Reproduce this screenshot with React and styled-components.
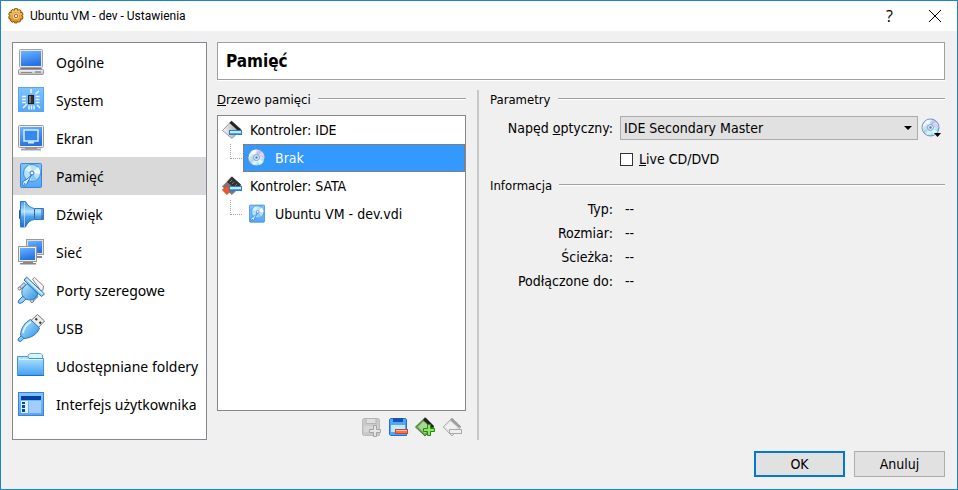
import React from "react";
import styled, { createGlobalStyle, css } from "styled-components";

const uiFont = '"DejaVu Sans Condensed", "DejaVu Sans", sans-serif';
const listFont = '"Noto Sans", "Open Sans", sans-serif';

const GlobalStyle = createGlobalStyle`
  *, *::before, *::after { box-sizing: border-box; }
  body { margin: 0; background: #f0f0f0; }
  button, select, input { font: inherit; color: inherit; margin: 0; }
  ul, dl, dd { margin: 0; padding: 0; list-style: none; }
`;

const Window = styled.div`
  min-height: 100vh;
  display: flex;
  flex-direction: column;
  border: 1px solid #1883d7;
  background: #f0f0f0;
  color: #000;
  font: 14px/20px ${uiFont};
`;

const TitleBar = styled.header`
  display: flex;
  align-items: center;
  height: 30px;
  padding-left: 7px;
  background: #fff;
  font: 12px/16px Roboto, "Open Sans", sans-serif;
`;

const WindowTitle = styled.span`
  flex: 1;
  padding-left: 6px;
`;

const CaptionButton = styled.button`
  display: grid;
  place-items: center;
  width: 45px;
  height: 30px;
  padding: 0;
  border: 0;
  background: none;
  font: 16px/20px "Open Sans", sans-serif;
`;

const Body = styled.div`
  flex: 1;
  display: grid;
  grid-template-columns: 195px minmax(0, 1fr);
  gap: 10px;
  padding: 11px 12px 11px 11px;
`;

const Sidebar = styled.nav`
  border: 1px solid #828790;
  background: #fff;
  font: 14px/20px ${listFont};
`;

const SidebarItem = styled.button`
  display: flex;
  align-items: center;
  gap: 11px;
  width: 100%;
  height: 38px;
  padding: 0 0 0 4px;
  border: 0;
  background: ${(p) => (p.$active ? "#d9d9d9" : "transparent")};
  white-space: nowrap;
  text-align: left;
`;

const SidebarLabel = styled.span`
  padding-top: 2px;
`;

const Page = styled.main`
  display: flex;
  flex-direction: column;
  min-width: 0;
`;

const PageHeading = styled.h1`
  margin: 0 0 10px;
  padding: 1px 8px 0;
  border: 1px solid #a0a0a0;
  box-shadow: 0 1px #fff;
  background: #fff;
  font: bold 17px/35px ${uiFont};
`;

const Panes = styled.div`
  flex: 1;
  display: grid;
  grid-template-columns: 249px 2px minmax(0, 1fr);
  column-gap: 11px;
`;

const Splitter = styled.div`
  background: #c8c8c8;
`;

const Pane = styled.section`
  display: flex;
  flex-direction: column;
  min-width: 0;
`;

const LegendRow = styled.h2`
  display: flex;
  align-items: center;
  gap: 7px;
  margin: 0;
  font: 13px/20px ${uiFont};

  &::after {
    content: "";
    flex: 1;
    height: 2px;
    margin-bottom: 2px;
    background: linear-gradient(#a0a0a0 50%, #fff 50%);
  }
`;

const Tree = styled.ul`
  flex: 1;
  margin-top: 5px;
  border: 1px solid #828790;
  background: #fff;
`;

const TreeButton = styled.button`
  display: flex;
  align-items: center;
  flex: 1;
  gap: 8px;
  width: 100%;
  height: 28px;
  padding: 0 0 0 3px;
  border: 1px solid transparent;
  background: transparent;
  text-align: left;

  ${(p) =>
    p.$selected &&
    css`
      border: 1px dotted #cc6600;
      background: #3399ff;
      color: #fff;
    `}
`;

const TreeBranch = styled.li`
  display: flex;
  padding-left: 12px;

  &::before {
    content: "";
    width: 12px;
    height: 15px;
    margin-right: 1px;
    border: dotted #a0a0a0;
    border-width: 0 0 1px 1px;
  }
`;

const ToolRow = styled.div`
  display: flex;
  justify-content: flex-end;
  gap: 7px;
  padding: 5px 4px 2px 0;
`;

const IconButton = styled.button`
  display: grid;
  place-items: center;
  width: 20px;
  height: 22px;
  padding: 0;
  border: 0;
  background: none;
`;

const Fields = styled.div`
  display: grid;
  grid-template-columns: 130px minmax(0, 1fr) 27px;
  padding-top: 6px;
  align-items: center;
`;

const FieldLabel = styled.label`
  padding-right: 7px;
  text-align: right;
  white-space: nowrap;
`;

const SelectBox = styled.div`
  display: grid;
  grid-template-columns: minmax(0, 1fr) 13px;
  align-items: center;
  height: 24px;
  border: 1px solid #adadad;
  background: #e1e1e1;

  & > svg {
    grid-area: 1 / 2;
    pointer-events: none;
  }
`;

const Select = styled.select`
  grid-area: 1 / 1 / 2 / 3;
  appearance: none;
  height: 22px;
  padding: 0 3px;
  border: 0;
  outline: 0;
  background: transparent;
`;

const DiscMenuButton = styled(IconButton)`
  margin-left: 3px;
`;

const CheckLabel = styled.label`
  grid-column: 2 / 4;
  display: flex;
  align-items: center;
  gap: 6px;
  padding: 9px 0 7px;
`;

const Checkbox = styled.input`
  appearance: none;
  width: 13px;
  height: 13px;
  border: 1px solid #333;
  background: #fff;
  &:checked { background: #0078d7; }
`;

const Info = styled.dl`
  display: grid;
  grid-template-columns: 123px minmax(0, 1fr);
  gap: 4px 12px;
  padding-top: 3px;
`;

const InfoName = styled.dt`
  text-align: right;
  white-space: nowrap;
`;

const Footer = styled.footer`
  display: flex;
  justify-content: flex-end;
  gap: 9px;
  padding: 0 12px 12px;
`;

const PushButton = styled.button`
  width: 91px;
  height: 26px;
  padding: 0;
  border: ${(p) => (p.$primary ? "2px solid #0078d7" : "1px solid #adadad")};
  background: #e1e1e1;
`;

const Icon = ({ size = 28, children }) => (
  <svg width={size} height={size} viewBox={`0 0 ${size} ${size}`} aria-hidden="true">
    {children}
  </svg>
);

const Gradients = () => (
  <svg width="0" height="0" aria-hidden="true">
    <defs>
      <linearGradient id="screen" x1="0" y1="0" x2=".3" y2="1">
        <stop stopColor="#69b5ff" />
        <stop offset="1" stopColor="#2872e5" />
      </linearGradient>
      <linearGradient id="tile" x1="0" y1="0" x2="0" y2="1">
        <stop stopColor="#7fc4ff" />
        <stop offset="1" stopColor="#55a6fb" />
      </linearGradient>
      <linearGradient id="folder" x1="0" y1="0" x2="0" y2="1">
        <stop stopColor="#b5e7ff" />
        <stop offset="1" stopColor="#42a0f4" />
      </linearGradient>
      <linearGradient id="horn" x1="0" y1="0" x2="0" y2="1">
        <stop stopColor="#4a9be4" />
        <stop offset=".4" stopColor="#b4e2ff" />
        <stop offset=".6" stopColor="#4fa0ea" />
        <stop offset="1" stopColor="#1f6fc8" />
      </linearGradient>
      <linearGradient id="plug" x1="0" y1="0" x2="1" y2="1">
        <stop stopColor="#c4ebff" />
        <stop offset="1" stopColor="#2590e4" />
      </linearGradient>
      <linearGradient id="metal" x1="0" y1="0" x2="0" y2="1">
        <stop stopColor="#fafafa" />
        <stop offset="1" stopColor="#b8b8b8" />
      </linearGradient>
      <linearGradient id="gold" x1="0" y1="0" x2="0" y2="1">
        <stop stopColor="#ffd27a" />
        <stop offset="1" stopColor="#dd8a16" />
      </linearGradient>
      <linearGradient id="steel" x1="0" y1="0" x2="1" y2="0">
        <stop stopColor="#f6f6f6" />
        <stop offset="1" stopColor="#9a9a9a" />
      </linearGradient>
      <linearGradient id="rainbow" x1="0" y1="0" x2="1" y2="1">
        <stop stopColor="#9fd3ff" />
        <stop offset=".25" stopColor="#f3f7ff" />
        <stop offset=".42" stopColor="#b9b8f8" />
        <stop offset=".6" stopColor="#dffbe8" />
        <stop offset=".78" stopColor="#8fdcff" />
        <stop offset="1" stopColor="#d9c6ff" />
      </linearGradient>
    </defs>
  </svg>
);

const GearIcon = () => (
  <Icon size={16}>
    <path
      fill="url(#gold)"
      stroke="#8a4a0b"
      d="M6.6.7h2.800l.4 1.900 1.100-1.200 2.200 1.500-.6 1.700 1.700-.2.9 2.400-1.600.9 1.600 1.100-.9 2.500-1.700-.3.4 1.800-2.200 1.500-1.200-1.200-.5 1.800H6.300l-.4-1.800-1.400 1.200-2-1.600.6-1.700-1.800.1-.6-2.400 1.500-1L.7 6.600l.9-2.300 1.700.3-.4-1.800L5 1.300l1.200 1.300z"
    />
    <circle cx="8" cy="8" r="3.700" fill="#ffd791" stroke="#e39a30" />
    <circle cx="8" cy="8" r="1.800" fill="#fff" stroke="#a8661a" />
  </Icon>
);

const ComputerIcon = () => (
  <Icon>
    <rect x="2.500" y="1.500" width="23" height="18" rx="1" fill="#e8e8e8" stroke="#a3a3a3" />
    <rect x="4" y="3" width="20" height="15" fill="url(#screen)" />
    <path d="M4 20h20l2.500 2H1.500z" fill="#777" />
    <rect x="1.500" y="21.500" width="25" height="5" rx="1" fill="url(#metal)" stroke="#999" />
    <path d="M4 24.500h11" stroke="#8b8b8b" />
    <path d="M18 24h6" stroke="#666" />
  </Icon>
);

const ChipIcon = () => (
  <Icon>
    <rect x="1.500" y="1.500" width="25" height="24" fill="url(#tile)" stroke="#5aa5ee" />
    <g stroke="#e8f6ff" strokeWidth="1.500">
      <path d="M14 3v4M12 19.500v4M14.500 19.500v4M17 19.500v4M5 10.500h4M5 13.500h4M5 16.500h4M18.500 10.500h4M18.500 13.500h4M18.500 16.500h4M18.500 8l3.500-3M6 22l4-4M20 19l3 3" />
    </g>
    <rect x="11.500" y="9.500" width="5" height="8" fill="#333" stroke="#222" />
    <path d="M12 10h2v7h-2z" fill="#777" />
  </Icon>
);

const DisplayIcon = () => (
  <Icon>
    <path d="M8 23h12v2H8z" fill="#888" />
    <path d="M4 25.500h20" stroke="#a6a6a6" strokeWidth="2" />
    <rect x="1.500" y="1.500" width="25" height="22" rx="1" fill="#eee" stroke="#9b9b9b" />
    <rect x="3" y="3" width="22" height="19" fill="url(#screen)" />
    <rect x="7" y="6" width="14" height="11" fill="#3688ef" stroke="#d4edff" strokeWidth="1.500" />
    <path d="M11 18.500h6" stroke="#d4edff" strokeWidth="2" />
  </Icon>
);

const DriveIcon = ({ small }) => (
  <svg width={small ? 20 : 28} height={small ? 20 : 28} viewBox="0 0 28 28" aria-hidden="true">
    <rect x="3.500" y="1.500" width="21" height="24" rx="1" fill="url(#tile)" stroke="#3c87cd" />
    <circle cx="15" cy="11" r="8.500" fill="#b6e2ff" stroke="#3f91da" />
    <path d="M15 11l6-6a8 8 0 0 1 2 7z" fill="#edfaff" />
    <path d="M15 11l-7-3a8 8 0 0 1 5-5z" fill="#dcf3ff" />
    <path d="M15 11l5 6a8 8 0 0 1-6 2z" fill="#87c9fa" />
    <circle cx="15" cy="11" r="2" fill="#fff" stroke="#2e78c5" />
    <path d="M14.500 13l-5 9.500c-1.500 2-4 1.500-4-1 0-2 2-3 4-4z" fill="#d7f0ff" stroke="#2e78c5" />
    <circle cx="7.500" cy="22" r="1" fill="#3d8bd8" />
  </svg>
);

const SpeakerIcon = () => (
  <Icon>
    <path d="M2.500 10.500h4v8h-4z" fill="#2463aa" stroke="#1c599f" />
    <path d="M3.500 1.500h5c2 4 5 6.500 9 7h9v11h-9c-4 .500-7 3-9 7.500h-5z" fill="url(#horn)" stroke="#2e78c4" />
    <path d="M7.500 2v25" stroke="#d0edff" opacity=".7" />
    <path d="M17.500 9v10" stroke="#2567b0" />
    <path d="M25 9v10" stroke="#2567b0" />
  </Icon>
);

const NetworkIcon = () => (
  <Icon>
    <path d="M18 18h7v2h-7z" fill="#888" />
    <rect x="9.500" y="1.500" width="17" height="15" fill="#ddd" stroke="#999" />
    <rect x="11" y="3" width="14" height="12" fill="url(#screen)" />
    <path d="M6 24h10v2H6zM3 25h16v1.500H3z" fill="#888" />
    <rect x="1.500" y="8.500" width="18" height="15" fill="#eee" stroke="#999" />
    <rect x="3" y="10" width="15" height="12" fill="url(#screen)" />
  </Icon>
);

const SerialIcon = () => (
  <Icon>
    <path d="M15.500 3l2-1.500 9 8.500-.500 4-2 1z" fill="#f4f4f4" stroke="#888" />
    <path d="M7 6.500l-5 5 1.500 2L9 9zM21 20.500l-5 5-2-1.500 5-5z" fill="#c9d6e0" stroke="#6d7d8a" />
    <path d="M7 19l-5 5-1 2.500 2 1 3-1.500 4-4z" fill="#8fceff" stroke="#2f78bd" />
    <path d="M10 7.500L21 18l-3 4.500c-3 2-7.500 2-10.500-.500s-3.500-7-1.500-10z" fill="url(#plug)" stroke="#2f78bd" />
    <path d="M9.500 1l18 17-3 2.500L7 4z" fill="#8ccffc" stroke="#2871b6" />
    <path d="M9.500 3l16 15" stroke="#daf3ff" strokeWidth="1.500" />
    <circle cx="2.500" cy="12.500" r="1.500" fill="#eee" stroke="#777" />
    <circle cx="15" cy="25" r="1.500" fill="#eee" stroke="#777" />
  </Icon>
);

const UsbIcon = () => (
  <Icon>
    <path d="M20.500.500l7 6.500-6 6.500-7.500-7z" fill="#ececec" stroke="#777" />
    <path d="M18.500 4.500l1.500 1.500M22.500 8l1.500 1.500" stroke="#333" strokeWidth="2" />
    <path d="M5 21l-4 4 .500 2 2 .500L8 23.500z" fill="#7ec7fa" stroke="#2d75b7" />
    <path d="M13.500 5.500l9 8.500c-2 6-8 10-15.500 10.500L3.500 21C4 14 8 8 13.500 5.500z" fill="url(#plug)" stroke="#2d75b7" />
    <path d="M6 19c1-5 4-9 8-11" fill="none" stroke="#e0f6ff" strokeWidth="1.500" />
  </Icon>
);

const FolderIcon = () => (
  <Icon>
    <path d="M10.500 6.500l1-4 2-1h10l2 1.500v5h-15z" fill="#d9f3ff" stroke="#62a7d6" />
    <path d="M.500 4.500h10l1.500 2h14.500v17H.500z" fill="url(#folder)" stroke="#4395d4" />
    <path d="M1 23.500h26" stroke="#1772c9" />
    <path d="M2 7.500h24" stroke="#d8f4ff" />
  </Icon>
);

const InterfaceIcon = () => (
  <Icon>
    <rect x="1.500" y="2.500" width="25" height="23" fill="url(#tile)" stroke="#3c82cc" />
    <path d="M4 6h20v4H4z" fill="#0740a5" />
    <path d="M4 11h7v12H4z" fill="#e1f1ff" />
    <path d="M12 11h12v12H12z" fill="#a3ccff" />
    <path d="M5 12h3v2H5zM5 15h3v3H5zM5 19h3v3H5z" fill="#0b48a8" />
  </Icon>
);

const ControllerIcon = ({ sata }) => (
  <Icon size={20}>
    <path d="M.500 10.500L9.500 1l9.500 8.500-9 9z" fill={sata ? "#777" : "url(#steel)"} stroke={sata ? "#888" : "#999"} />
    {sata ? (
      <>
        <path d="M5 6l5-5.500 9 8-5 5z" fill="#333" />
        <path d="M8 6l2-2M10 8l2-2M13 10l2-2" stroke="#777" />
        <path d="M.500 14l4.500-4.500 4 4.500-4 4.500z" fill="#f0562b" stroke="#d8482a" />
      </>
    ) : (
      <path d="M7.500 3l2-2 9.500 8.500-2 2z" fill="#222" />
    )}
    <rect x="7.500" y="10.500" width="12" height="4" fill="#c5e9ff" stroke="#2b7fc8" />
    <path d="M8 13.500h11" stroke="#4ba4ea" />
  </Icon>
);

const DiscIcon = ({ menu }) => (
  <Icon size={20}>
    <circle cx="9.500" cy="9.500" r="8.500" fill="url(#rainbow)" stroke="#5b8fca" />
    <path d="M9.500 9.500L4 3.500a8 8 0 0 1 5-2zM9.500 9.500l7 4a8 8 0 0 1-4 3.500z" fill="#fff" opacity=".65" />
    <path d="M9.500 9.500l7-4a8 8 0 0 1 1 4z" fill="#e2b8f6" opacity=".7" />
    <path d="M9.500 9.500l-7 4a8 8 0 0 1-1-4z" fill="#b6f6c4" opacity=".7" />
    <circle cx="9.500" cy="9.500" r="3" fill="#dfeafa" stroke="#7fa3d2" />
    <circle cx="9.500" cy="9.500" r="1.200" fill="#3f83cc" />
    {menu && <path d="M13 15h7l-3.500 4z" fill="#000" />}
  </Icon>
);

const DiskAddIcon = () => (
  <Icon size={20}>
    <path d="M1.500 2.500l1-1h15l1 1v16h-16l-1-1z" fill="#cacaca" stroke="#bbb" />
    <path d="M5 1.500h10v5H5z" fill="#dedede" stroke="#b4b4b4" />
    <path d="M3 9h14v6H3z" fill="#d6d6d6" />
    <path d="M12.500 8.500h3v4h4v3h-4v4h-3v-4h-4v-3h4z" fill="#e5e5e5" stroke="#a4a4a4" />
  </Icon>
);

const DiskRemoveIcon = () => (
  <Icon size={20}>
    <path d="M1.500 2.500l1-1h15l1 1v16h-16l-1-1z" fill="#4fa7f8" stroke="#236dcc" />
    <path d="M5 1h10v4H5z" fill="#1555ae" />
    <path d="M3 8h14v7H3z" fill="#c2e8ff" />
    <rect x="7.500" y="12.500" width="12" height="4" fill="#fa704c" stroke="#c94627" />
    <path d="M8 13.500h11" stroke="#ffc3ab" />
  </Icon>
);

const ControllerAddIcon = () => (
  <Icon size={20}>
    <path d="M.500 10L10 .800 19 10l-9 9z" fill="#6da457" stroke="#3e7430" />
    <path d="M3 10l5.500-5.500 7 6-5.500 6z" fill="#a8d891" />
    <path d="M8 3l2.500-2.500L19 9l-2 2z" fill="#222" />
    <path d="M12.500 7.500h3v4h4v3h-4v4h-3v-4h-4v-3h4z" fill="#8be85c" stroke="#28851a" />
  </Icon>
);

const ControllerRemoveIcon = () => (
  <Icon size={20}>
    <path d="M1 10L10 1l9 9-9 9z" fill="#ddd" stroke="#b4b4b4" />
    <path d="M3 10l5.500-5.500 6.500 6-5 6z" fill="#f1f1f1" />
    <path d="M8 3l2-2 9 8.500-2 1.500z" fill="#a0a0a0" />
    <rect x="7.500" y="12.500" width="12" height="4" fill="#eee" stroke="#aaa" />
  </Icon>
);

const categories = [
  ["Ogólne", ComputerIcon],
  ["System", ChipIcon],
  ["Ekran", DisplayIcon],
  ["Pamięć", DriveIcon],
  ["Dźwięk", SpeakerIcon],
  ["Sieć", NetworkIcon],
  ["Porty szeregowe", SerialIcon],
  ["USB", UsbIcon],
  ["Udostępniane foldery", FolderIcon],
  ["Interfejs użytkownika", InterfaceIcon],
];

const tools = [
  ["Dodaj załącznik", DiskAddIcon, true],
  ["Usuń załącznik", DiskRemoveIcon, false],
  ["Dodaj kontroler", ControllerAddIcon, false],
  ["Usuń kontroler", ControllerRemoveIcon, true],
];

const details = ["Typ:", "Rozmiar:", "Ścieżka:", "Podłączone do:"];

export default function App() {
  return (
    <Window>
      <GlobalStyle />
      <Gradients />
      <TitleBar>
        <GearIcon />
        <WindowTitle>Ubuntu VM - dev - Ustawienia</WindowTitle>
        <CaptionButton aria-label="Pomoc">?</CaptionButton>
        <CaptionButton aria-label="Zamknij">
          <Icon size={12}>
            <path d="M0 0l12 12M12 0L0 12" stroke="#000" />
          </Icon>
        </CaptionButton>
      </TitleBar>
      <Body>
        <Sidebar aria-label="Kategorie">
          {categories.map(([name, Picture]) => (
            <SidebarItem key={name} $active={name === "Pamięć"}>
              <Picture />
              <SidebarLabel>{name}</SidebarLabel>
            </SidebarItem>
          ))}
        </Sidebar>
        <Page>
          <PageHeading>Pamięć</PageHeading>
          <Panes>
            <Pane>
              <LegendRow>
                <span><u>D</u>rzewo pamięci</span>
              </LegendRow>
              <Tree>
                <li><TreeButton><ControllerIcon />Kontroler: IDE</TreeButton></li>
                <TreeBranch><TreeButton $selected><DiscIcon />Brak</TreeButton></TreeBranch>
                <li><TreeButton><ControllerIcon sata />Kontroler: SATA</TreeButton></li>
                <TreeBranch><TreeButton><DriveIcon small />Ubuntu VM - dev.vdi</TreeButton></TreeBranch>
              </Tree>
              <ToolRow>
                {tools.map(([name, Picture, disabled]) => (
                  <IconButton key={name} aria-label={name} disabled={disabled}>
                    <Picture />
                  </IconButton>
                ))}
              </ToolRow>
            </Pane>
            <Splitter />
            <Pane>
              <LegendRow>Parametry</LegendRow>
              <Fields>
                <FieldLabel htmlFor="slot">Napęd <u>o</u>ptyczny:</FieldLabel>
                <SelectBox>
                  <Select id="slot" defaultValue="sm">
                    <option value="sm">IDE Secondary Master</option>
                  </Select>
                  <Icon size={8}>
                    <path d="M0 2h8L4 6z" fill="#000" />
                  </Icon>
                </SelectBox>
                <DiscMenuButton aria-label="Wybierz dysk optyczny"><DiscIcon menu /></DiscMenuButton>
                <CheckLabel>
                  <Checkbox type="checkbox" />
                  <span><u>L</u>ive CD/DVD</span>
                </CheckLabel>
              </Fields>
              <LegendRow>Informacja</LegendRow>
              <Info>
                {details.map((name) => (
                  <React.Fragment key={name}>
                    <InfoName>{name}</InfoName>
                    <dd>--</dd>
                  </React.Fragment>
                ))}
              </Info>
            </Pane>
          </Panes>
        </Page>
      </Body>
      <Footer>
        <PushButton $primary>OK</PushButton>
        <PushButton>Anuluj</PushButton>
      </Footer>
    </Window>
  );
}
